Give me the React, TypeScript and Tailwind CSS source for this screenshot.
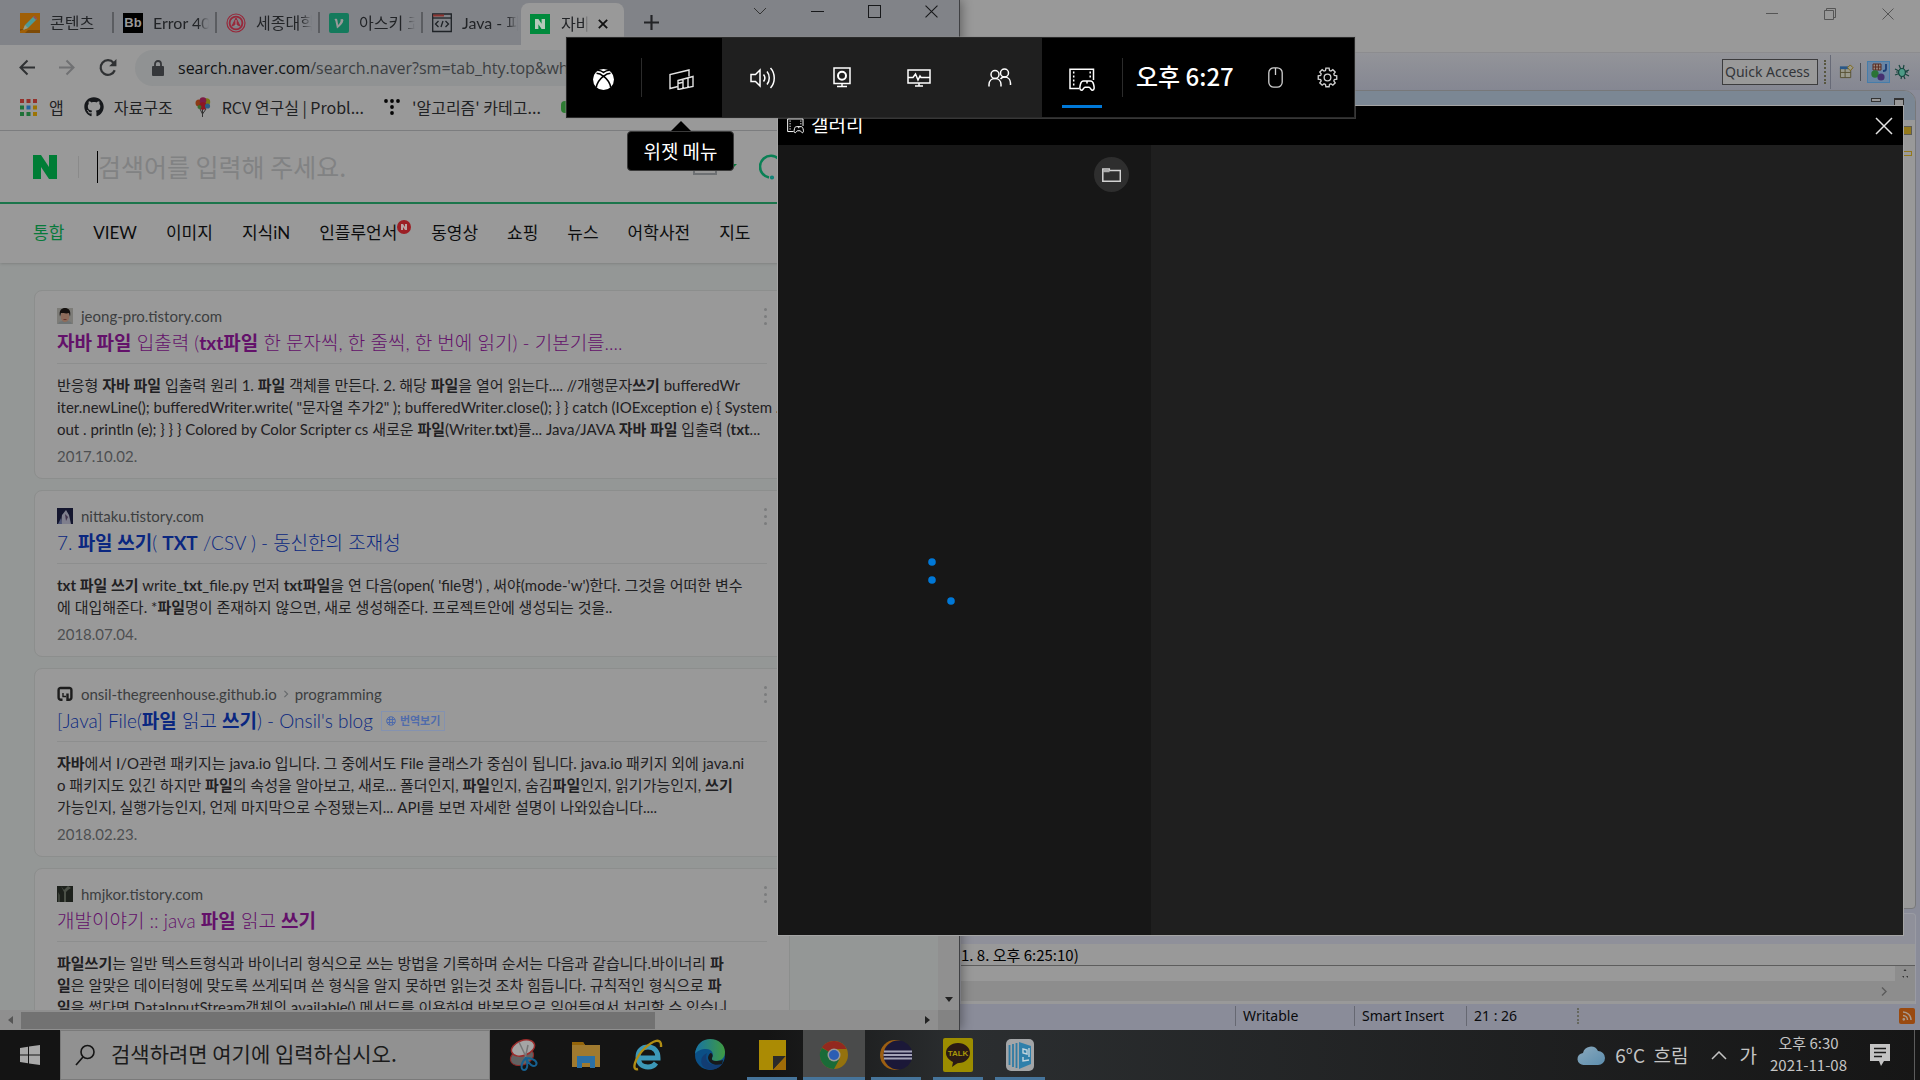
import React from 'react';
import { FaGithub } from 'react-icons/fa';

type Part = string | { b: string };
type Result = {
  site: string;
  path?: string;
  icon: React.ReactNode;
  title: Part[];
  visited: boolean;
  translate?: boolean;
  lines: Part[][];
  date: string;
};

const b = (text: string): Part => ({ b: text });

const Rich = ({ parts }: { parts: Part[] }) => (
  <>
    {parts.map((p, i) =>
      typeof p === 'string' ? <span key={i}>{p}</span> : <strong key={i} className="font-bold">{p.b}</strong>
    )}
  </>
);

const FaceIcon = () => (
  <svg viewBox="0 0 16 16" className="h-4 w-4">
    <rect width="16" height="16" fill="#7d7c78" />
    <path d="M1 16c1-3 3-3 7-3s6 0 7 3z" fill="#6f7475" />
    <ellipse cx="8" cy="8.500" rx="4.200" ry="5.500" fill="#8d6c5b" />
    <path d="M3 8.500C1.500 2 5 0 8 0s6.500 2 5 8.500L12 5c-3 1-5 0-8 0z" fill="#15110f" />
    <path d="M6.500 11.500h3" stroke="#6d3a33" />
  </svg>
);
const AnimeIcon = () => (
  <svg viewBox="0 0 16 16" className="h-4 w-4">
    <rect width="16" height="16" fill="#14162e" />
    <path d="M4 16L5 7l4-5 3 5 2 9z" fill="#7f7f8d" />
    <path d="M8 6l3 3-2 4z" fill="#40334b" />
    <path d="M1 16l3-6 1 6z" fill="#4d5578" />
  </svg>
);
const GreenhouseIcon = () => (
  <svg viewBox="0 0 16 16" className="h-4 w-4" fill="none" stroke="#1c1c1c" strokeWidth="2.400">
    <path d="M5.500 13.800H4a2.400 2.400 0 0 1-2.400-2.400V4A2 2 0 0 1 4 2h8a2 2 0 0 1 2.400 2v7.400a2.400 2.400 0 0 1-2.400 2.400h-1.500V7.500" />
    <path d="M6 7v3.500h3" strokeWidth="1.400" />
  </svg>
);
const ForestIcon = () => (
  <svg viewBox="0 0 16 16" className="h-4 w-4">
    <rect width="16" height="16" fill="#1d211c" />
    <path d="M4 0l3 4 4-4 3 2-3 2-2 2v10H7V6z" fill="#4b5047" />
    <path d="M1 16V6l2 3v7z" fill="#3c4139" />
  </svg>
);

const results: Result[] = [
  {
    site: 'jeong-pro.tistory.com',
    icon: <FaceIcon />,
    visited: true,
    title: [b('자바 파일'), ' 입출력 (', b('txt파일'), ' 한 문자씩, 한 줄씩, 한 번에 읽기) - 기본기를....'],
    lines: [
      ['반응형 ', b('자바 파일'), ' 입출력 원리 1. ', b('파일'), ' 객체를 만든다. 2. 해당 ', b('파일'), '을 열어 읽는다.... //개행문자', b('쓰기'), ' bufferedWr'],
      ['iter.newLine(); bufferedWriter.write( "문자열 추가2" ); bufferedWriter.close(); } } catch (IOException e) { System .'],
      ['out . println (e); } } } Colored by Color Scripter cs 새로운 ', b('파일'), '(Writer.', b('txt'), ')를... Java/JAVA ', b('자바 파일'), ' 입출력 (', b('txt'), '...'],
    ],
    date: '2017.10.02.',
  },
  {
    site: 'nittaku.tistory.com',
    icon: <AnimeIcon />,
    visited: false,
    title: ['7. ', b('파일 쓰기'), '( ', b('TXT'), ' /CSV ) - 동신한의 조재성'],
    lines: [
      [b('txt 파일 쓰기'), ' write_', b('txt'), '_file.py 먼저 ', b('txt파일'), "을 연 다음(open( 'file명') , 써야(mode-'w')한다. 그것을 어떠한 변수"],
      ['에 대입해준다. *', b('파일'), '명이 존재하지 않으면, 새로 생성해준다. 프로젝트안에 생성되는 것을..'],
    ],
    date: '2018.07.04.',
  },
  {
    site: 'onsil-thegreenhouse.github.io',
    path: 'programming',
    icon: <GreenhouseIcon />,
    visited: false,
    translate: true,
    title: ['[Java] File(', b('파일'), ' 읽고 ', b('쓰기'), ") - Onsil's blog"],
    lines: [
      [b('자바'), '에서 I/O관련 패키지는 java.io 입니다. 그 중에서도 File 클래스가 중심이 됩니다. java.io 패키지 외에 java.ni'],
      ['o 패키지도 있긴 하지만 ', b('파일'), '의 속성을 알아보고, 새로... 폴더인지, ', b('파일'), '인지, 숨김', b('파일'), '인지, 읽기가능인지, ', b('쓰기')],
      ['가능인지, 실행가능인지, 언제 마지막으로 수정됐는지... API를 보면 자세한 설명이 나와있습니다....'],
    ],
    date: '2018.02.23.',
  },
  {
    site: 'hmjkor.tistory.com',
    icon: <ForestIcon />,
    visited: true,
    title: ['개발이야기 :: java ', b('파일'), ' 읽고 ', b('쓰기')],
    lines: [
      [b('파일쓰기'), '는 일반 텍스트형식과 바이너리 형식으로 쓰는 방법을 기록하며 순서는 다음과 같습니다.바이너리 ', b('파')],
      [b('일'), '은 알맞은 데이터형에 맞도록 쓰게되며 쓴 형식을 알지 못하면 읽는것 조차 힘듭니다. 규칙적인 형식으로 ', b('파')],
      [b('일'), '을 썼다면 DataInputStream객체의 available() 메서드를 이용하여 반복문으로 읽어들여서 처리할 수 있습니'],
    ],
    date: '2017.05.11.',
  },
];

function ResultCard({ r }: { r: Result }) {
  return (
    <article className="rounded-lg border border-[#8c8e8d] bg-[#999] px-[22px] pt-3 pb-2.5 font-[Lato,'Noto_Sans_CJK_KR',sans-serif]">
      <div className="flex h-[26px] items-center gap-2 text-[15px] text-[#3c3e40]">
        {r.icon}
        <span>{r.site}</span>
        {r.path && (
          <>
            <svg viewBox="0 0 6 10" className="-mx-0.5 h-2 w-1.5" fill="none" stroke="#66696b" strokeWidth="1.400"><path d="M1 1l4 4-4 4" /></svg>
            <span>{r.path}</span>
          </>
        )}
        <button aria-label="더보기" className="ml-auto flex flex-col gap-1">
          <i className="h-[3px] w-[3px] rounded-full bg-[#7b7c7d]" />
          <i className="h-[3px] w-[3px] rounded-full bg-[#7b7c7d]" />
          <i className="h-[3px] w-[3px] rounded-full bg-[#7b7c7d]" />
        </button>
      </div>
      <h3 className={`flex h-[35px] items-start gap-2 border-b border-[#8d8e8e] text-[19px] leading-7 font-light whitespace-nowrap ${r.visited ? 'text-[#63116a]' : 'text-[#0a2780]'}`}>
        <a href="#result" className="whitespace-pre"><Rich parts={r.title} /></a>
        {r.translate && (
          <button className="mt-1 flex h-5 items-center gap-1 border border-[#8492b0] px-1 text-[11px] leading-4 font-bold text-[#506cab]">
            <svg viewBox="0 0 10 10" className="h-2.5 w-2.5" fill="none" stroke="#506cab"><circle cx="5" cy="5" r="4.300" /><path d="M1 3.500h8M1 6.500h8M3.600 1v8M6.400 1v8" /></svg>
            번역보기
          </button>
        )}
      </h3>
      <div className="mt-2.5 text-[15px] leading-[22px] text-[#1f2022]">
        {r.lines.map((l, i) => (
          <p key={i} className="whitespace-pre"><Rich parts={l} /></p>
        ))}
      </div>
      <p className="mt-1 text-[15px] leading-6 text-[#4d4f51]">{r.date}</p>
    </article>
  );
}

const Close = ({ className }: { className: string }) => (
  <svg viewBox="0 0 12 12" className={className} fill="none" stroke="currentColor"><path d="M.5.5l11 11M11.500.5l-11 11" /></svg>
);

const tabs = [
  {
    label: '콘텐츠',
    icon: (
      <svg viewBox="0 0 20 20" className="h-5 w-5"><rect width="20" height="20" fill="#a05f06" /><path d="M3 17l2-5 9-9 3 3-9 9z" fill="#4d9a98" /><path d="M3 17l2-5 3 3z" fill="#9c9a80" /><path d="M13 4l3 3 1.400-1.400-3-3z" fill="#99504c" /><path d="M0 16h4l-4 2zM8 17h12v3H5z" fill="#7d4a06" /></svg>
    ),
  },
  {
    label: 'Error 404',
    icon: <span className="flex h-5 w-5 items-center justify-center bg-black font-[Liberation_Sans] text-[13px] font-bold text-[#999]">Bb</span>,
  },
  {
    label: '세종대학교',
    icon: (
      <svg viewBox="0 0 20 20" className="h-5 w-5" fill="none" stroke="#97283a"><circle cx="10" cy="10" r="9" strokeWidth="1.200" /><circle cx="10" cy="10" r="6.400" strokeWidth="1.800" /><path d="M10 5l-4 8 4-2 4 2z" fill="#97283a" /><path d="M10 7v6" stroke="#999" /></svg>
    ),
  },
  {
    label: '아스키 코드',
    icon: (
      <svg viewBox="0 0 20 20" className="h-5 w-5"><rect width="20" height="20" rx="2" fill="#147a5c" /><path d="M5.500 6.200c1.600-.8 2.600-.6 2.900 1L9.200 12c1.800-1.800 3-4 2.200-5.400 1-1 3.200-.8 3 1C14 10.400 11 13.500 8 15.500L6.400 8z" fill="#999" /></svg>
    ),
  },
  {
    label: 'Java - 파일',
    icon: (
      <svg viewBox="0 0 20 20" className="h-5 w-5" fill="none" stroke="#1e2226" strokeWidth="1.300"><path d="M.7 1h18.600v17.500H.7z" /><path d="M1 2.500h11" stroke="#8c3430" strokeWidth="2" /><path d="M1 5h18" /><path d="M6.500 8L3.500 11l3 3M13.500 8l3 3-3 3M11 8l-2 6" /></svg>
    ),
  },
];

const navItems = ['통합', 'VIEW', '이미지', '지식iN', '인플루언서', '동영상', '쇼핑', '뉴스', '어학사전', '지도'];

function ChromeWindow() {
  return (
    <section aria-label="Chrome" className="absolute inset-y-0 left-0 flex w-1/2 flex-col overflow-hidden border-r border-[#3f4043] bg-[#999] shadow-[2px_0_10px_rgba(0,0,0,0.35)]">
      <div className="flex h-[45px] shrink-0 bg-[#818388] pl-[11px] font-[Lato,'Noto_Sans_CJK_KR',sans-serif]">
        {tabs.map((t) => (
          <button key={t.label} className="my-3 flex w-[103px] shrink-0 items-center gap-2.5 border-r-2 border-[#5b5d61] pl-[9px] text-left text-base text-[#222427] nth-5:w-[98px] nth-5:border-0">
            <span className="shrink-0">{t.icon}</span>
            <span className="w-14 overflow-hidden mask-r-from-80% whitespace-nowrap">{t.label}</span>
          </button>
        ))}
        <div className="mt-[3px] flex w-[103px] items-center rounded-t-lg bg-[#999] pl-[9px] text-base text-[#222427]">
          <span className="flex h-5 w-5 shrink-0 items-center justify-center bg-[#008a3c]">
            <svg viewBox="0 0 10 10" className="h-2.5 w-2.5"><path d="M0 0h3.400l3.200 4.800V0H10v10H6.600L3.400 5.200V10H0z" fill="#b5c9ba" /></svg>
          </span>
          <button className="ml-[11px] w-[27px] overflow-hidden mask-r-from-85% whitespace-nowrap">자바 파일</button>
          <button aria-label="탭 닫기" className="ml-2.5"><svg viewBox="0 0 12 12" className="h-2.5 w-2.5" stroke="#111" strokeWidth="2.200"><path d="M1 1l10 10M11 1L1 11" /></svg></button>
        </div>
        <button aria-label="새 탭" className="ml-5"><svg viewBox="0 0 14 14" className="h-[15px] w-[15px]" stroke="#232427" strokeWidth="2"><path d="M7 0v14M0 7h14" /></svg></button>
        <div className="ml-auto flex h-[22px] items-center gap-11 pr-[21px] text-[#17181a]">
          <button aria-label="탭 검색"><svg viewBox="0 0 14 8" className="h-2 w-3.5" fill="none" stroke="#333"><path d="M1 1l6 6 6-6" /></svg></button>
          <button aria-label="최소화" className="h-px w-[13px] bg-[#17181a]" />
          <button aria-label="최대화" className="h-[13px] w-[13px] border border-[#17181a]" />
          <button aria-label="닫기"><Close className="h-[13px] w-[13px]" /></button>
        </div>
      </div>

      <div className="flex h-[45px] shrink-0 items-center gap-6 pl-[19px]">
        <button aria-label="뒤로"><svg viewBox="0 0 16 16" className="h-[17px] w-4" fill="none" stroke="#2f3133" strokeWidth="2"><path d="M8.500 1L1.500 8l7 7M1.500 8H16" /></svg></button>
        <button aria-label="앞으로"><svg viewBox="0 0 16 16" className="h-[17px] w-4" fill="none" stroke="#707173" strokeWidth="2"><path d="M7.500 1l7 7-7 7M14.500 8H0" /></svg></button>
        <button aria-label="새로고침"><svg viewBox="0 0 16 16" className="h-[18px] w-[18px]" fill="none" stroke="#2f3133" strokeWidth="2"><path d="M14 10a6.500 6.500 0 1 1-1-6.500" /><path d="M15.500 0v6.500H9z" fill="#2f3133" stroke="none" /></svg></button>
        <div className="-ml-1.5 flex h-9 flex-1 items-center rounded-l-full bg-[#909293] pl-[17px]">
          <svg viewBox="0 0 12 16" className="h-4 w-3" fill="#35373a"><rect y="6" width="12" height="10" rx="1" /><path d="M3 7V4a3 3 0 0 1 6 0v3" fill="none" stroke="#35373a" strokeWidth="1.800" /></svg>
          <div role="textbox" aria-label="주소" className="ml-[14px] font-[Open_Sans] text-base whitespace-nowrap text-[#3c3f42]"><span className="text-[#111315]">search.naver.com</span>/search.naver?sm=tab_hty.top&amp;where=nexearch</div>
        </div>
      </div>

      <div className="flex h-[41px] shrink-0 items-center border-b border-[#7c7d7f] pb-1.5 pl-5 text-base whitespace-nowrap text-[#1f2123]">
        <a href="#apps" className="flex items-center gap-3">
          <svg viewBox="0 0 17 17" className="h-[17px] w-[17px]">
            <path d="M0 0h4v4H0zM6.500 0h4v4h-4zM13 0h4v4h-4z" fill="#94302b" /><path d="M0 6.500h4v4H0zM0 13h4v4H0zM6.500 13h4v4h-4z" fill="#1f7138" />
            <path d="M6.500 6.500h4v4h-4z" fill="#2361a0" /><path d="M13 6.500h4v4h-4zM13 13h4v4h-4z" fill="#9c7404" />
          </svg>앱
        </a>
        <a href="#github" className="ml-5 flex items-center gap-2.5"><FaGithub className="h-5 w-5 text-[#16181b]" />자료구조</a>
        <a href="#rcv" className="ml-[22px] flex items-center gap-[11px]">
          <svg viewBox="0 0 16 20" className="h-5 w-4"><path d="M7.500 12v8M5 12l2.500 5L11 12" stroke="#333" fill="none" /><circle cx="4" cy="6" r="3.500" fill="#8b3b16" /><circle cx="11.500" cy="5" r="3.700" fill="#7c7714" /><circle cx="8" cy="3.500" r="3.300" fill="#7d1b45" /><circle cx="8" cy="9" r="3.800" fill="#8d1721" /><circle cx="12.500" cy="9" r="2.600" fill="#2c5d84" /><circle cx="4.500" cy="10" r="2" fill="#3d6d2d" /></svg>
          RCV 연구실 | Probl...
        </a>
        <a href="#algo" className="ml-5 flex items-center gap-3">
          <svg viewBox="0 0 16 16" className="h-4 w-4" fill="#050505"><circle cx="2" cy="2" r="1.900" /><circle cx="8" cy="2" r="1.900" /><circle cx="14" cy="2" r="1.900" /><circle cx="8" cy="8" r="1.900" /><circle cx="8" cy="14" r="1.900" /></svg>
          '알고리즘' 카테고...
        </a>
        <i className="ml-5 h-3 w-5 rounded-sm bg-[#2e7c33]" />
      </div>

      <div className="flex min-h-0 flex-1 overflow-hidden">
        <div className="min-w-0 flex-1 overflow-hidden bg-[#949796]">
          <header className="bg-[#999] shadow">
            <div className="flex h-[73px] items-center border-b-2 border-[#1b754b] pl-[33px]">
              <a href="#naver" aria-label="NAVER"><svg viewBox="0 0 24 24" className="h-6 w-6" fill="#007d36"><path d="M0 0h8l8 12V0h8v24h-8L8 12v12H0z" /></svg></a>
              <i className="ml-[21px] h-[22px] w-px bg-[#8a8a8a]" />
              <i className="ml-[18px] h-8 w-px bg-black" />
              <input aria-label="검색" placeholder="검색어를 입력해 주세요." className="min-w-0 flex-1 bg-transparent pb-0.5 text-[25px] leading-9 outline-none placeholder:text-[#818283]" />
              <span className="mr-[22px] flex items-center gap-2">
                <svg viewBox="0 0 24 16" className="h-4 w-6" fill="none" stroke="#6d7073" strokeWidth="2"><rect x="1" y="1" width="22" height="14" /></svg>
                <svg viewBox="0 0 12 6" className="h-1.5 w-3" fill="#08793b"><path d="M0 0h12L6 6z" /></svg>
              </span>
              <button aria-label="검색하기" className="mr-[153px]"><svg viewBox="0 0 26 26" className="h-[26px] w-[26px]" fill="none" stroke="#0a8055" strokeWidth="2.600"><path d="M10 23.500A11 11 0 1 1 23 12" /><circle cx="13" cy="23.500" r=".8" fill="#0c8276" stroke="#0c8276" /></svg></button>
            </div>
            <nav className="flex h-[59px] items-center gap-[29px] pb-0.5 pl-[33px] font-[Lato,'Noto_Sans_CJK_KR',sans-serif] text-[17px] whitespace-nowrap text-[#0c0d0e]">
              {navItems.map((n, i) => (
                <a key={n} href="#tab" className={i === 0 ? 'text-[#08793b]' : n === '인플루언서' ? 'flex w-[83px]' : ''}>
                  {n}
                  {n === '인플루언서' && (
                    <i className="flex h-3.5 w-3.5 shrink-0 items-center justify-center rounded-full bg-[#9c1f25]">
                      <svg viewBox="0 0 10 10" className="h-1.5 w-1.5" fill="#b9a5a5"><path d="M0 0h3.400l3.200 4.800V0H10v10H6.600L3.400 5.200V10H0z" /></svg>
                    </i>
                  )}
                </a>
              ))}
              <i className="h-1 w-1 rounded-full bg-[#747576]" />
            </nav>
          </header>
          <main className="flex w-[790px] flex-col gap-[11px] pt-[27px] pl-[34px]">
            {results.map((r) => <ResultCard key={r.site} r={r} />)}
          </main>
        </div>
        <div className="flex w-[21px] flex-col items-center justify-end bg-[#909090] pb-2">
          <svg viewBox="0 0 8 5" className="h-[5px] w-2" fill="#222"><path d="M0 0h8L4 5z" /></svg>
        </div>
      </div>
      <div className="flex h-5 shrink-0 items-center bg-[#8f8f8f]">
        <svg viewBox="0 0 5 8" className="mx-2 h-2 w-[5px]" fill="#555"><path d="M5 0v8L0 4z" /></svg>
        <div className="h-[17px] w-[634px] bg-[#727272]" />
        <svg viewBox="0 0 5 8" className="mr-2 ml-auto h-2 w-[5px]" fill="#222"><path d="M0 0v8l5-4z" /></svg>
        <div className="h-5 w-[21px] bg-[#838383]" />
      </div>
    </section>
  );
}

function EclipseWindow() {
  return (
    <section aria-label="Eclipse" className="absolute inset-y-0 right-0 flex w-1/2 flex-col bg-[#8a8c99] text-[15px]">
      <div className="flex h-[52px] shrink-0 items-start justify-end gap-[46px] bg-[#999] pt-2 pr-[26px] text-[#555]">
        <button aria-label="최소화" className="mt-[5px] h-px w-3 bg-[#555]" />
        <button aria-label="이전 크기로"><svg viewBox="0 0 12 12" className="h-3 w-3" fill="none" stroke="#555"><path d="M.5 2.500h9v9h-9zM2.500 2.500v-2h9v9h-2" /></svg></button>
        <button aria-label="닫기"><Close className="h-3 w-3" /></button>
      </div>
      <div className="flex h-[38px] shrink-0 items-center justify-end border-t border-[#8c8c8f] bg-linear-to-b from-[#939499] to-[#858792] pr-2.5">
        <input aria-label="Quick Access" placeholder="Quick Access" className="h-[26px] w-24 border border-[#3c3c3e] bg-[#999] px-0.5 font-[Noto_Sans] text-sm outline-none placeholder:text-[#333539]" />
        <i className="ml-1.5 h-6 border-r-2 border-dotted border-[#57563f]" />
        <i className="ml-1 h-[34px] w-px bg-[#676a77]" />
        <button aria-label="Open Perspective" className="ml-2"><svg viewBox="0 0 16 16" className="h-[15px] w-[15px]" fill="#9a9a8c" stroke="#565032"><path d="M1.500 4.500h11v10h-11zM1.500 9h11M6.500 4.500v10" /><path d="M1 4h9" stroke="#295787" strokeWidth="3" /><path d="M12 1l3 3-3 3-3-3z" stroke="#80640f" /></svg></button>
        <i className="mx-1.5 h-[18px] w-px bg-[#4c4e55]" />
        <button aria-label="Java" className="flex h-[22px] w-[23px] items-center justify-center border border-[#467daa] bg-[#6985a4]"><svg viewBox="0 0 18 18" className="h-[18px] w-[18px]"><path d="M3 1h8v6H3zM3 4h8M5.600 1v6M8.400 1v6" fill="#998a80" stroke="#5b2b20" /><path d="M16 1v5q0 2-3 2" fill="none" stroke="#1c3e74" strokeWidth="1.800" /><circle cx="5" cy="11" r="3.700" fill="#2a7436" /><circle cx="11" cy="14" r="3.600" fill="#453070" /></svg></button>
        <button aria-label="Debug" className="ml-1"><svg viewBox="0 0 16 16" className="h-4 w-4" stroke="#17463f" strokeWidth="1.200"><path d="M1 5l14 7M1 11l14-5M5 1l6 14M10 1L7 15M2 8h12" /><ellipse cx="8" cy="8.500" rx="3.400" ry="4" fill="#4d9a86" /></svg></button>
      </div>
      <div className="mr-1 flex flex-1 flex-col overflow-hidden rounded-tr-xl rounded-br border border-[#77787a] bg-[#999]">
        <div className="flex h-[29px] shrink-0 justify-end gap-[13px] bg-[#7b8794] pt-[7px] pr-[11px]">
          <button aria-label="Minimize" className="h-1 w-2.5 border border-[#333] bg-[#999]" />
          <button aria-label="Maximize" className="h-2.5 w-2.5 border border-t-2 border-[#333] bg-[#999]" />
        </div>
        <div className="flex flex-col items-end gap-4 bg-[#999] pt-1.5 pr-[3px]">
          <i className="h-[9px] w-[9px] border border-[#5d5c55] bg-[#94791b]" />
          <i className="h-[5px] w-[9px] border border-[#94791b]" />
        </div>
      </div>
      <div className="mt-1 mr-1 flex h-[91px] shrink-0 flex-col overflow-hidden rounded-t border border-b-0 border-[#9a9ba3] bg-[#999]">
        <div className="h-[30px] shrink-0 bg-[#8f909a]" />
        <p className="h-[22px] shrink-0 border-b border-[#5d5d5d] text-[15px] leading-[22px] whitespace-nowrap text-black">1. 8. 오후 6:25:10)</p>
        <div className="flex h-[15px] shrink-0 justify-end"><span className="flex h-full w-5 flex-col items-center justify-center bg-[#8d8d8d]"><svg viewBox="0 0 8 10" className="h-2.5 w-2" fill="#333"><path d="M4 0l1.500 2h-3zM1 7h2v2zM5 7h2v2z" /></svg></span></div>
        <div className="flex h-5 shrink-0 items-center justify-end bg-[#8d8d8d] pr-7"><svg viewBox="0 0 6 9" className="h-[9px] w-1.5" fill="none" stroke="#5b5b5b" strokeWidth="1.400"><path d="M1 .5l4 4-4 4" /></svg></div>
      </div>
      <footer className="flex h-[26px] shrink-0 items-center justify-end pb-0.5 font-[Noto_Sans] text-sm whitespace-nowrap text-[#090a0c]">
        <span className="w-[119px] border-l border-[#666872] pl-[7px]">Writable</span>
        <span className="w-[112px] border-l border-[#666872] pl-[7px]">Smart Insert</span>
        <span className="w-[111px] border-l border-[#666872] pl-[7px]">21 : 26</span>
        <i className="h-4 border-r-2 border-dotted border-[#66685f]" />
        <button aria-label="RSS" className="mr-[5px] ml-80"><svg viewBox="0 0 16 16" className="h-4 w-4" fill="none" stroke="#a89a8e" strokeWidth="1.500"><rect width="16" height="16" rx="2" fill="#9a4a0f" stroke="none" /><path d="M4 4a8 8 0 0 1 8 8M4 7.500A4.500 4.500 0 0 1 8.500 12" /><circle cx="4.800" cy="11.300" r=".6" /></svg></button>
      </footer>
    </section>
  );
}

const GalleryGlyph = ({ className }: { className: string }) => (
  <svg viewBox="0 0 26 24" className={className} fill="none" stroke="#fff" strokeWidth="1.500">
    <path d="M10 20.500H1V1.200h23.500V12" />
    <path d="M4.700 3.500v15M21.200 3.500v8" strokeDasharray="2 2" />
    <path d="M12.500 22.300c-2-.3-2-2.600-1-6.300.5-2 1.300-3 3-3h7c1.700 0 2.500 1 3 3 1 3.700 1 6-1 6.300-1.500 0-2.200-3-3.500-3h-4c-1.300 0-2 3-3.500 3zM18 13v2.500" />
  </svg>
);

function GalleryWindow() {
  return (
    <section aria-label="갤러리" className="absolute top-[105px] right-4 bottom-[94px] left-[777px] flex flex-col border border-[#a5a5a5] bg-[#1f1f1f]">
      <header className="flex h-[39px] shrink-0 items-center gap-[7px] bg-black pr-2.5 pl-[9px] text-[19px] text-white">
        <GalleryGlyph className="h-4 w-[17px]" />
        <h2 className="pb-0.5">갤러리</h2>
        <button aria-label="닫기" className="ml-auto"><svg viewBox="0 0 18 18" className="h-[18px] w-[18px]" stroke="#e4e4e4" strokeWidth="1.500"><path d="M1 1l16 16M17 1L1 17" /></svg></button>
      </header>
      <div className="flex min-h-0 flex-1">
        <aside className="flex w-[373px] flex-col bg-[#171717]">
          <div className="flex justify-end pt-3 pr-[22px]">
            <button aria-label="폴더 열기" className="flex h-[35px] w-[35px] items-center justify-center rounded-full bg-[#2e2e2e]">
              <svg viewBox="0 0 19 14" className="h-3.5 w-[19px]" fill="none" stroke="#d2d2d2" strokeWidth="1.500"><path d="M.8 1h6.500v1.500h11v10.700H.8z" /><path d="M1 3h6.500" strokeWidth="2.500" stroke="#aaa" /></svg>
            </button>
          </div>
          <div className="flex flex-1 justify-center pt-[360px] pr-11">
            <svg viewBox="0 0 60 60" className="h-[60px] w-[60px]" fill="#0078d7"><circle cx="19" cy="10" r="3.800" /><circle cx="19" cy="28" r="3.800" /><circle cx="38" cy="49" r="3.800" /></svg>
          </div>
        </aside>
        <div className="flex-1" />
      </div>
    </section>
  );
}

function GameBar() {
  const s = { fill: 'none', stroke: '#fff', strokeWidth: 1.5 };
  return (
    <div className="absolute top-[37px] left-[566px]">
      <div className="flex h-[81px] items-stretch border border-[#2a2a2a] bg-black shadow-[0_0_0_1px_#8a8a8a66]">
        <button aria-label="Xbox" className="flex w-[74px] items-center justify-center pr-0.5">
          <svg viewBox="0 0 21 21" className="mt-1 h-[21px] w-[21px]"><circle cx="10.500" cy="10.500" r="10.500" fill="#fff" /><path d="M5 1.200C7 1.300 9 2.300 10.500 3.400 12 2.300 14 1.300 16 1.200M3.200 18.500c.8-4.200 4-8.700 7.300-11.300 3.300 2.600 6.500 7.100 7.300 11.300M3.500 4.200C6 4.200 8.600 5.600 10.500 7.400 12.400 5.600 15 4.200 17.500 4.200" fill="none" stroke="#000" strokeWidth="1.600" /></svg>
        </button>
        <i className="my-5 w-px bg-[#2b2b2b]" />
        <button aria-label="위젯 메뉴" className="flex w-20 items-center justify-center pr-0.5">
          <svg viewBox="0 0 25 21" className="mt-1 h-[21px] w-[25px]" fill="none" stroke="#e2e2e2" strokeWidth="1.400"><path d="M9 17.500L1 19.500V5.500L20 1v6.500" /><path d="M9 11.500l15-4v10L9 20.500zM14 10v9.500M19 9v9.500M9 14.500l5-1.200" /></svg>
        </button>
        <div className="flex w-[320px] items-center justify-around bg-[#1f1f1f] pr-0.5">
          <button aria-label="오디오"><svg viewBox="0 0 26 24" className="h-6 w-[26px]" {...s}><path d="M1 8.500h4.500L10 4V20l-4.500-4.500H1z" /><path d="M13.500 8.500c1.600 2 1.600 5 0 7M17 5.500c3 3.500 3 9.500 0 13M20.500 2c5 5.500 5 14.500 0 20" /></svg></button>
          <button aria-label="캡처"><svg viewBox="0 0 18 21" className="h-[21px] w-[18px]" {...s}><path d="M1 1h16v15.500H1zM9 16.500V19M4 19.500h10" /><circle cx="9" cy="8.800" r="4" strokeWidth="2" /></svg></button>
          <button aria-label="성능"><svg viewBox="0 0 24 18" className="h-[18px] w-6" {...s}><path d="M1 1h22v13H1zM12 14v3M8 17h8M1 8.500h5L8.500 5l2.500 6 2-4 1 1.500h9" /></svg></button>
          <button aria-label="Xbox 소셜"><svg viewBox="0 0 24 19" className="h-[19px] w-6" {...s}><circle cx="7" cy="6.500" r="4" /><circle cx="16.500" cy="5" r="4" /><path d="M1 18.500v-2c0-3.500 2.500-6 6-6s6 2.500 6 6v2M12.500 11c1-1.300 2.500-2 4-2 3.500 0 6 2.500 6 6v2" /></svg></button>
        </div>
        <button aria-label="갤러리" className="relative flex w-20 items-center justify-center">
          <GalleryGlyph className="mt-1 h-6 w-[26px]" />
          <i className="absolute bottom-[9px] left-5 h-[3px] w-10 bg-[#0078d7]" />
        </button>
        <i className="my-5 w-px bg-[#2b2b2b]" />
        <time className="flex w-[145px] items-center pb-1 pl-[13px] text-2xl font-medium whitespace-nowrap text-white">오후 6:27</time>
        <button aria-label="마우스" className="shrink-0"><svg viewBox="0 0 15 21" className="h-[21px] w-[15px]" fill="none" stroke="#d0d0d0" strokeWidth="1.300"><rect x=".8" y=".8" width="13.400" height="19.400" rx="5" /><path d="M7.500 1v7" /></svg></button>
        <button aria-label="설정" className="mr-4 ml-[34px] shrink-0">
          <svg viewBox="0 0 22 22" className="h-[21px] w-[21px]" fill="none" stroke="#d0d0d0" strokeWidth="1.400"><circle cx="11" cy="11" r="3.500" /><path d="M9.300 1.200h3.400l.4 2.500 1.500.6 2-1.500 2.500 2.500-1.500 2 .6 1.500 2.500.4v3.500l-2.500.4-.6 1.500 1.500 2-2.500 2.500-2-1.500-1.500.6-.4 2.500H9.300l-.4-2.500-1.500-.6-2 1.500-2.500-2.500 1.500-2-.6-1.500-2.500-.4V9.200l2.500-.4.600-1.500-1.500-2 2.500-2.500 2 1.500 1.500-.6z" /></svg>
        </button>
      </div>
      <div role="tooltip" className="absolute top-[84px] left-[61px] flex w-[107px] flex-col items-center">
        <svg viewBox="0 0 20 10" className="h-2.5 w-5"><path d="M0 10L10 0l10 10z" fill="#000" /></svg>
        <span className="w-full rounded border border-[#3a3a3a] bg-black py-[7px] text-center text-[19px] leading-6 text-white">위젯 메뉴</span>
      </div>
    </div>
  );
}

const taskIcons: { name: string; state: string; icon: React.ReactNode }[] = [
  { name: '캡처 도구', state: '', icon: <svg viewBox="0 0 32 32" className="h-8 w-8"><ellipse cx="14" cy="18" rx="12" ry="8" transform="rotate(-20 14 18)" fill="#626262" stroke="#8d2727" /><ellipse cx="15" cy="9" rx="12" ry="7.500" transform="rotate(-20 15 9)" fill="#a5a5a5" stroke="#9c2b2b" strokeWidth="1.500" /><path d="M11 3l8 17M20 6l-3 14" stroke="#777" strokeWidth="1.500" /><path d="M18 19c-5 4-6 12-2 12s4-7 2-12zM18 19c8 0 12 4 10 7s-8-1-10-7z" fill="none" stroke="#17608f" strokeWidth="2" /></svg> },
  { name: '파일 탐색기', state: '', icon: <svg viewBox="0 0 28 28" className="h-7 w-7"><path d="M0 1h11l2 3h15v22H0z" fill="#a07a2f" /><path d="M0 1h11l2 3H0z" fill="#94650a" /><path d="M5 27V15h18v12h-5v-5h-8v5z" fill="#2b70a5" /></svg> },
  { name: 'Internet Explorer', state: '', icon: <svg viewBox="0 0 32 32" className="h-8 w-8" fill="none"><path d="M24 24c-2 3-5 4-8 4-6 0-10-4-10-10S10 8 16 8s10 4 10 11H7" stroke="#3c98b8" strokeWidth="5" /><path d="M6 30C-1 32 3 19 12 10S30-2 29 8" stroke="#b08d14" strokeWidth="2.400" /></svg> },
  { name: 'Microsoft Edge', state: '', icon: <svg viewBox="0 0 30 32" className="h-8 w-[30px]"><defs><linearGradient id="edge" x1="0" y1="0" x2="1" y2="0"><stop offset="0" stopColor="#1773a6" /><stop offset="1" stopColor="#3f9a42" /></linearGradient></defs><circle cx="15" cy="16" r="15" fill="#0b4f86" /><path d="M0 15C1 5 8 0 15 0c9 0 15 6 15 13 0 6-4 9-9 9-4 0-5-1-4-3 2-3 1-9-6-9-5 0-9 2-11 5z" fill="url(#edge)" /><path d="M12 14c-3 7 2 15 16 10-5 8-17 9-21 2-2-5 0-10 5-12z" fill="#123d73" /><path d="M17 19c-1 3 3 4 11 2l-1 4c-7 2-13 0-14-6 0-3 2-5 3-5 2 1 2 3 1 5z" fill="#171a1c" /></svg> },
  { name: '스티커 메모', state: 'bg-transparent', icon: <svg viewBox="0 0 27 30" className="h-[30px] w-[27px]"><path d="M0 0h27v30H0z" fill="#ab8b04" /><path d="M14 30V16h13z" fill="#2a2a2a" /><path d="M14 30l13-14v14z" fill="#a06c08" /></svg> },
  { name: 'Chrome', state: 'bg-[#4a4b4b]', icon: <svg viewBox="0 0 30 32" className="h-8 w-[30px]"><circle cx="15" cy="16" r="14" fill="#94720e" /><path d="M15 16L3 8.500A14 14 0 0 1 27.500 10H15z" fill="#93291f" /><path d="M2.800 9A14 14 0 0 0 15 30l5.500-10L15 16z" fill="#1a6b38" /><path d="M2.800 9L10 20l5-4z" fill="#1a6b38" /><circle cx="15" cy="16" r="6.500" fill="#999" /><circle cx="15" cy="16" r="5" fill="#2a5db4" /></svg> },
  { name: 'Eclipse', state: 'bg-transparent', icon: <svg viewBox="0 0 32 32" className="h-8 w-8"><circle cx="15" cy="16" r="15" fill="#9c5f12" /><circle cx="18" cy="16" r="14.500" fill="#1b1838" /><path d="M4 12.500h28M3.500 16h28.500M4 19.500h28" stroke="#a4a4b8" strokeWidth="2" /></svg> },
  { name: '카카오톡', state: 'bg-transparent', icon: <svg viewBox="0 0 30 34" className="h-[34px] w-[30px]"><rect width="30" height="34" rx="2" fill="#9c8d00" /><path d="M15 5c7 0 12 4.500 12 10s-5 10-11 10c-2 0-4 2-7 4l1-5c-4-2-7-5-7-9C3 9.500 8 5 15 5z" fill="#2a1a14" /><text x="15" y="18" textAnchor="middle" fontSize="8" fontWeight="bold" fontFamily="Liberation Sans" fill="#a89708">TALK</text></svg> },
  { name: '한컴 사전', state: 'bg-transparent', icon: <svg viewBox="0 0 28 32" className="h-8 w-7"><rect width="28" height="32" rx="5" fill="#a3a5a7" /><path d="M3.500 6v20M7 5v23M10.500 4v25" stroke="#2f7ba3" strokeWidth="1.800" /><path d="M13 3l12 4v18l-12 5z" fill="#2f80ab" /><path d="M17 10l4 1v4l-4-1zM23 9v9M17 18v4l6-1" stroke="#c2d4dd" fill="none" strokeWidth="1.400" /></svg> },
];

function Taskbar() {
  return (
    <footer className="z-10 flex h-[50px] shrink-0 items-stretch bg-linear-to-r from-[#141414] via-[#2b2e30] to-[#161616] from-40% via-50% text-[#c4c4c4]">
      <button aria-label="시작" className="flex w-[60px] items-center justify-center">
        <svg viewBox="0 0 20 20" className="h-5 w-5" fill="#a8a8a8"><path d="M0 3l8-1.200v7.700H0zM9 1.600L20 0v9.500H9zM0 10.500h8v7.700L0 17zM9 10.500h11V20L9 18.400z" /></svg>
      </button>
      <label className="flex w-[430px] items-center gap-4 border border-[#7a7a7a] bg-[#919191] pl-3.5">
        <svg viewBox="0 0 20 22" className="h-[22px] w-5 shrink-0" fill="none" stroke="#151515" strokeWidth="1.600"><circle cx="12.500" cy="8" r="6.500" /><path d="M8 13L1 21" /></svg>
        <input aria-label="검색" placeholder="검색하려면 여기에 입력하십시오." className="min-w-0 flex-1 bg-transparent pb-0.5 text-[21px] outline-none placeholder:text-[#1b1b1b]" />
      </label>
      <div className="ml-[3px] flex">
        {taskIcons.map((t) => (
          <button key={t.name} aria-label={t.name} className={`relative flex w-[62px] items-center justify-center ${t.state}`}>
            {t.icon}
            {t.state !== '' && <i className={t.name === 'Chrome' ? 'absolute inset-x-0 bottom-0 h-[3px] bg-[#46749a]' : 'absolute inset-x-1.5 bottom-0 h-[3px] bg-[#46749a]'} />}
          </button>
        ))}
      </div>
      <div className="ml-auto flex items-center pr-[5px]">
        <svg viewBox="0 0 28 22" className="h-[22px] w-7"><defs><linearGradient id="cloud" x1="0" y1="0" x2="1" y2="1"><stop offset="0" stopColor="#8aa9bd" /><stop offset="1" stopColor="#5c8dad" /></linearGradient></defs><path d="M7 21a6 6 0 0 1-1-12A8 8 0 0 1 21 7a7 7 0 0 1 0 14z" fill="url(#cloud)" /></svg>
        <span className="ml-2.5 text-[19px] whitespace-pre">6°C  흐림</span>
        <button aria-label="숨겨진 아이콘 표시" className="ml-[22px]"><svg viewBox="0 0 16 9" className="h-[9px] w-4" fill="none" stroke="#c4c4c4" strokeWidth="1.500"><path d="M1 8l7-7 7 7" /></svg></button>
        <span className="ml-[13px] text-[19px]">가</span>
        <time className="ml-[13px] pb-0.5 text-center text-[15px] leading-[22px]">오후 6:30<br />2021-11-08</time>
        <button aria-label="알림" className="ml-[23px]"><svg viewBox="0 0 20 22" className="h-[22px] w-5"><path d="M0 0h20v17h-6l-3 5-2-5H0z" fill="#c4c4c4" /><path d="M4 4.500h12M4 8.500h12M4 12.500h8" stroke="#1b1b1b" strokeWidth="1.500" /></svg></button>
        <i className="ml-6 h-[50px] w-px bg-[#5c5c5c]" />
      </div>
    </footer>
  );
}

export default function App() {
  return (
    <div className="flex h-screen w-full flex-col overflow-hidden bg-[#8a8c99] font-['Noto_Sans_CJK_KR',sans-serif]">
      <div className="relative min-h-0 flex-1">
        <EclipseWindow />
        <ChromeWindow />
        <GalleryWindow />
        <GameBar />
      </div>
      <Taskbar />
    </div>
  );
}
